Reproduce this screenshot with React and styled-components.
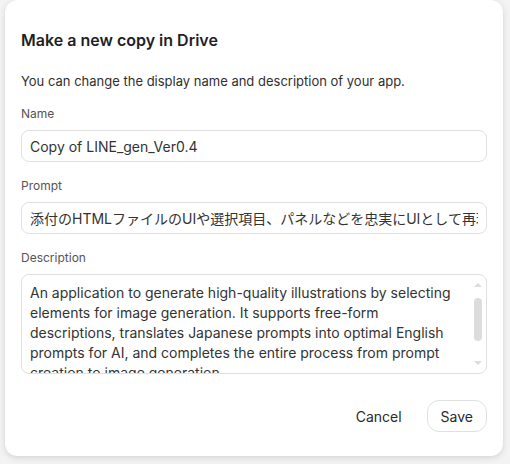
import React, { useState } from 'react';
import styled, { createGlobalStyle } from 'styled-components';

const GlobalStyle = createGlobalStyle`
  html, body {
    margin: 0;
    padding: 0;
    background: #f3f3f3;
    font-family: Inter, "Noto Sans", "Noto Sans CJK JP", sans-serif;
  }
`;

const Page = styled.div`
  width: 510px;
  height: 464px;
  overflow: hidden;
`;

const Dialog = styled.div`
  box-sizing: border-box;
  width: 498px;
  height: 456px;
  margin-left: 5px;
  padding: 30px 16px 24px;
  background: #fff;
  border-radius: 12px;
  box-shadow: 0 2px 6px rgba(0, 0, 0, 0.12), 0 0 1px rgba(0, 0, 0, 0.08);
  display: flex;
  flex-direction: column;
`;

const Title = styled.h2`
  margin: 0;
  font-size: 16px;
  line-height: 20px;
  font-weight: 600;
  color: #1f1f1f;
`;

const Intro = styled.p`
  margin: 22px 0 16px;
  font-size: 13px;
  line-height: 18px;
  color: #2f2f2f;
`;

const Field = styled.label`
  display: flex;
  flex-direction: column;
  gap: 8px;
  margin-bottom: ${p => p.$last ? 0 : 16}px;
`;

const Label = styled.span`
  font-size: 12px;
  line-height: 16px;
  color: #555;
`;

const Input = styled.input`
  box-sizing: border-box;
  width: 100%;
  height: 32px;
  padding: 0 8px;
  border: 1px solid #e0e0e0;
  border-radius: 8px;
  font-family: inherit;
  font-size: 14px;
  color: #333;
  background: #fff;
  outline: none;
`;

const AreaBox = styled.div`
  position: relative;
`;

const TextArea = styled.textarea`
  display: block;
  box-sizing: border-box;
  width: 100%;
  height: 100px;
  padding: 8px 26px 8px 8px;
  border: 1px solid #e0e0e0;
  border-radius: 8px;
  font-family: inherit;
  font-size: 14px;
  line-height: 20px;
  color: #333;
  resize: none;
  outline: none;
  overflow: hidden;
`;

/* slim scrollbar drawn on top of the textarea's right edge */
const ScrollBar = styled.div`
  position: absolute;
  top: 9px;
  bottom: 9px;
  right: 5px;
  width: 8px;
  display: flex;
  flex-direction: column;
  align-items: center;
  pointer-events: none;
`;

const Arrow = styled.div`
  width: 0;
  height: 0;
  border-left: 4px solid transparent;
  border-right: 4px solid transparent;
  ${p => p.$down
    ? 'border-top: 4px solid #dcdcdc; margin-top: auto;'
    : 'border-bottom: 4px solid #dcdcdc;'}
`;

const Thumb = styled.div`
  width: 8px;
  height: 43px;
  margin-top: 11px;
  border-radius: 4px;
  background: #dcdcdc;
`;

const Actions = styled.div`
  margin-top: auto;
  display: flex;
  justify-content: flex-end;
  gap: 11px;
`;

const Button = styled.button`
  height: 32px;
  padding: 0 13px;
  border: 1px solid ${p => p.$outlined ? '#e0e0e0' : 'transparent'};
  border-radius: 12px;
  background: #fff;
  font-family: inherit;
  font-size: 14px;
  color: #2a2a2a;
  cursor: pointer;
`;

export default function App() {
  const [name, setName] = useState('Copy of LINE_gen_Ver0.4');
  const [prompt, setPrompt] = useState(
    '添付のHTMLファイルのUIや選択項目、パネルなどを忠実にUIとして再現してください。'
  );
  const [description, setDescription] = useState(
    'An application to generate high-quality illustrations by selecting elements for image generation. It supports free-form descriptions, translates Japanese prompts into optimal English prompts for AI, and completes the entire process from prompt creation to image generation.'
  );

  return (
    <Page>
      <GlobalStyle />
      <Dialog>
        <Title>Make a new copy in Drive</Title>
        <Intro>You can change the display name and description of your app.</Intro>
        <Field>
          <Label>Name</Label>
          <Input value={name} onChange={e => setName(e.target.value)} />
        </Field>
        <Field>
          <Label>Prompt</Label>
          <Input value={prompt} onChange={e => setPrompt(e.target.value)} />
        </Field>
        <Field $last>
          <Label>Description</Label>
          <AreaBox>
            <TextArea value={description} onChange={e => setDescription(e.target.value)} />
            <ScrollBar>
              <Arrow />
              <Thumb />
              <Arrow $down />
            </ScrollBar>
          </AreaBox>
        </Field>
        <Actions>
          <Button>Cancel</Button>
          <Button $outlined>Save</Button>
        </Actions>
      </Dialog>
    </Page>
  );
}
